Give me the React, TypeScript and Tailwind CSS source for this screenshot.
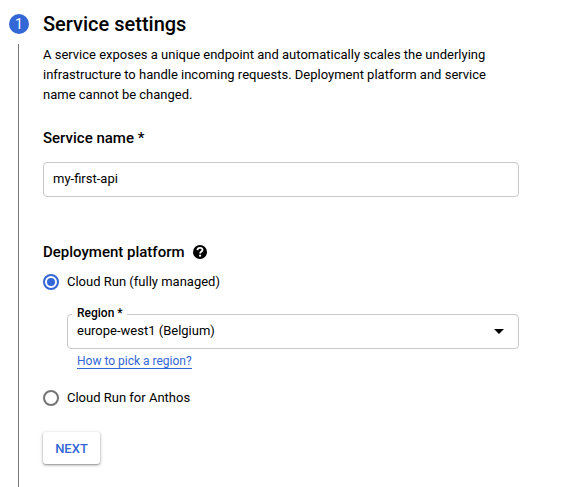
export default function App() {
  return (
    <div className="flex h-[487px] w-[569px] overflow-hidden bg-white font-['Roboto',sans-serif] text-[13px] leading-5 text-black">
      <div className="flex w-[43px] shrink-0 flex-col pl-[9px] pt-[14px]">
        <div className="flex size-5 items-center justify-center rounded-full bg-[#3367d6] text-[14px] text-white">1</div>
        <div className="ml-[9px] mt-[10px] w-px grow bg-[#757575]" />
      </div>
      <main className="flex w-[476px] flex-col items-start">
        <h1 className="mt-3 h-6 whitespace-nowrap text-[20px] font-medium leading-6">Service settings</h1>
        <p className="mt-[9px] whitespace-nowrap">
          A service exposes a unique endpoint and automatically scales the underlying<br />
          infrastructure to handle incoming requests. Deployment platform and service<br />
          name cannot be changed.
        </p>
        <h2 className="mt-[23px] h-5 text-[15px] font-medium leading-5">Service name *</h2>
        <div className="mt-[14px] flex h-[35px] w-full items-center rounded border border-[#c8c8c8] px-[9px] pb-[2px]">my-first-api</div>
        <div className="mt-[45px] flex h-5 items-center gap-2">
          <h2 className="text-[15px] font-medium leading-5">Deployment platform</h2>
          <svg viewBox="0 0 14 14" className="size-[14px]" fill="none">
            <circle cx="7" cy="7" r="7" fill="black" />
            <path d="M4.500 5.200C4.500 3.800 5.500 2.900 7 2.900s2.500.9 2.500 2.100C9.500 6.600 7.100 6.600 7.100 8.600" stroke="white" strokeWidth="1.800" />
            <path d="M6.100 9.700h2v1.900h-2z" fill="white" />
          </svg>
        </div>
        <div className="mt-[10px] flex h-5 items-center gap-2">
          <span className="flex size-4 items-center justify-center rounded-full border-2 border-[#3367d6]"><span className="size-2 rounded-full bg-[#3367d6]" /></span>
          <span>Cloud Run (fully managed)</span>
        </div>
        <div className="relative ml-6 mt-[22px] flex h-[35px] w-[452px] items-center justify-between rounded border border-[#c8c8c8] pl-[9px] pr-[14px]">
          <span className="absolute left-1 top-[-10px] bg-white pl-[5px] pr-1 text-[12px] font-medium leading-4">Region *</span>
          <span className="pb-[2px]">europe-west1 (Belgium)</span>
          <svg viewBox="0 0 10 5" className="h-[5px] w-[10px]"><path d="M0 0h10L5 5z" /></svg>
        </div>
        <a className="ml-[34px] mt-1 h-4 border-b border-[#3367d6] text-[12px] leading-4 text-[#3367d6]">How to pick a region?</a>
        <div className="mt-[19px] flex h-5 items-center gap-2">
          <span className="size-4 rounded-full border-2 border-[#757575]" />
          <span>Cloud Run for Anthos</span>
        </div>
        <button className="mt-6 h-8 w-[57px] rounded-[3px] bg-white pt-[2px] text-[13px] font-medium text-[#3367d6] shadow-[0_1px_2px_rgba(0,0,0,0.35),0_1px_4px_rgba(0,0,0,0.18)]">NEXT</button>
      </main>
    </div>
  );
}
